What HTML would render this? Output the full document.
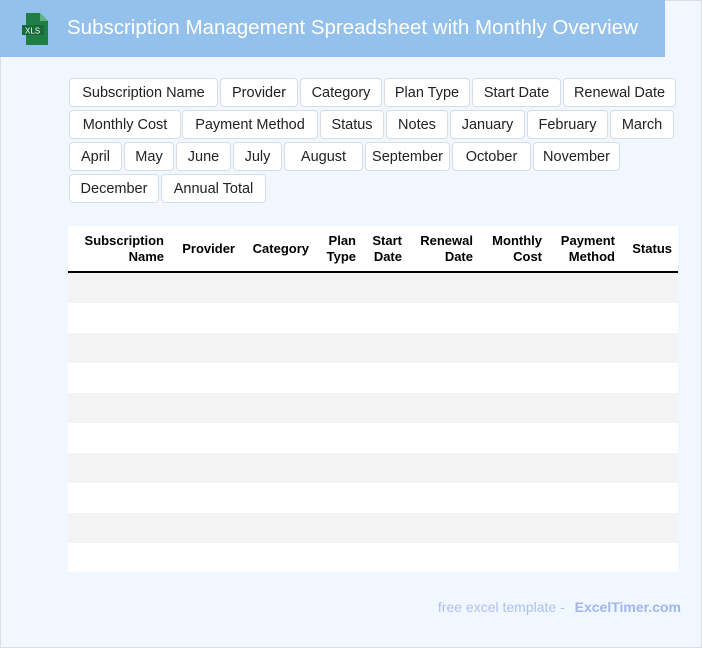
<!DOCTYPE html>
<html><head><meta charset="utf-8"><style>
*{margin:0;padding:0;box-sizing:border-box}
body{width:702px;height:648px;background:#fff;font-family:"Liberation Sans",Arial,sans-serif;position:relative;overflow:hidden}
.page{position:absolute;left:0;top:0;width:702px;height:648px;background:#f0f7ff;border:1px solid #d8dee6}
.hdr{position:absolute;left:-1px;top:-1px;width:665px;height:57px;background:#93c1ec}
.hdr h1{position:absolute;left:67px;top:16px;font-size:20.5px;font-weight:normal;color:#fff;white-space:nowrap}
.tag{position:absolute;height:29px;display:flex;align-items:center;justify-content:center;padding-top:1px;background:#fff;border:1px solid #d6dde6;border-radius:4px;font-size:14.5px;color:#222;white-space:nowrap;overflow:hidden}
.tbl{position:absolute;left:67px;top:225px;width:610px;height:346px;background:#fff}
.th{position:absolute;font-size:13px;font-weight:bold;color:#000;text-align:right;line-height:16px;white-space:nowrap}
.line{position:absolute;left:0;top:45px;width:610px;height:2px;background:#000}
.row{position:absolute;left:0;width:610px;height:30px}
.g{background:#f3f3f3}
.foot{position:absolute;right:20px;top:598px;font-size:14px;color:#aebff0}
.foot b{color:#9fb6ee;margin-left:6px}
</style></head><body>
<div class="page">
<div class="hdr">
<svg style="position:absolute;left:22px;top:13px" width="28" height="32" viewBox="0 0 28 32"><path d="M4 0h14l8 8v24H4z" fill="#1e7e45"/><path d="M18 0v8h8z" fill="#5fb37f"/><rect x="0" y="12" width="22" height="10" fill="#166b38"/><text x="3" y="20.5" font-size="8" fill="#fff" font-family="Liberation Sans">XLS</text></svg>
<h1>Subscription Management Spreadsheet with Monthly Overview</h1>
</div>
<span class="tag" style="left:68px;top:77px;width:149px">Subscription Name</span>
<span class="tag" style="left:219px;top:77px;width:78px">Provider</span>
<span class="tag" style="left:299px;top:77px;width:82px">Category</span>
<span class="tag" style="left:383px;top:77px;width:86px">Plan Type</span>
<span class="tag" style="left:471px;top:77px;width:89px">Start Date</span>
<span class="tag" style="left:562px;top:77px;width:113px">Renewal Date</span>
<span class="tag" style="left:68px;top:109px;width:112px">Monthly Cost</span>
<span class="tag" style="left:181px;top:109px;width:136px">Payment Method</span>
<span class="tag" style="left:319px;top:109px;width:64px">Status</span>
<span class="tag" style="left:385px;top:109px;width:62px">Notes</span>
<span class="tag" style="left:449px;top:109px;width:75px">January</span>
<span class="tag" style="left:526px;top:109px;width:81px">February</span>
<span class="tag" style="left:609px;top:109px;width:64px">March</span>
<span class="tag" style="left:68px;top:141px;width:53px">April</span>
<span class="tag" style="left:123px;top:141px;width:50px">May</span>
<span class="tag" style="left:175px;top:141px;width:55px">June</span>
<span class="tag" style="left:232px;top:141px;width:49px">July</span>
<span class="tag" style="left:283px;top:141px;width:79px">August</span>
<span class="tag" style="left:364px;top:141px;width:85px">September</span>
<span class="tag" style="left:451px;top:141px;width:79px">October</span>
<span class="tag" style="left:532px;top:141px;width:87px">November</span>
<span class="tag" style="left:68px;top:173px;width:90px">December</span>
<span class="tag" style="left:160px;top:173px;width:105px">Annual Total</span>
<div class="tbl">
<div class="th" style="right:514px;top:7px">Subscription<br>Name</div>
<div class="th" style="right:443px;top:15px">Provider</div>
<div class="th" style="right:369px;top:15px">Category</div>
<div class="th" style="right:322px;top:7px">Plan<br>Type</div>
<div class="th" style="right:276px;top:7px">Start<br>Date</div>
<div class="th" style="right:205px;top:7px">Renewal<br>Date</div>
<div class="th" style="right:136px;top:7px">Monthly<br>Cost</div>
<div class="th" style="right:63px;top:7px">Payment<br>Method</div>
<div class="th" style="right:6px;top:15px">Status</div>
<div class="line"></div>
<div class="row g" style="top:47px"></div>
<div class="row g" style="top:107px"></div>
<div class="row g" style="top:167px"></div>
<div class="row g" style="top:227px"></div>
<div class="row g" style="top:287px"></div>
</div>
<div class="foot">free excel template - <b>ExcelTimer.com</b></div>
</div>
</body></html>
